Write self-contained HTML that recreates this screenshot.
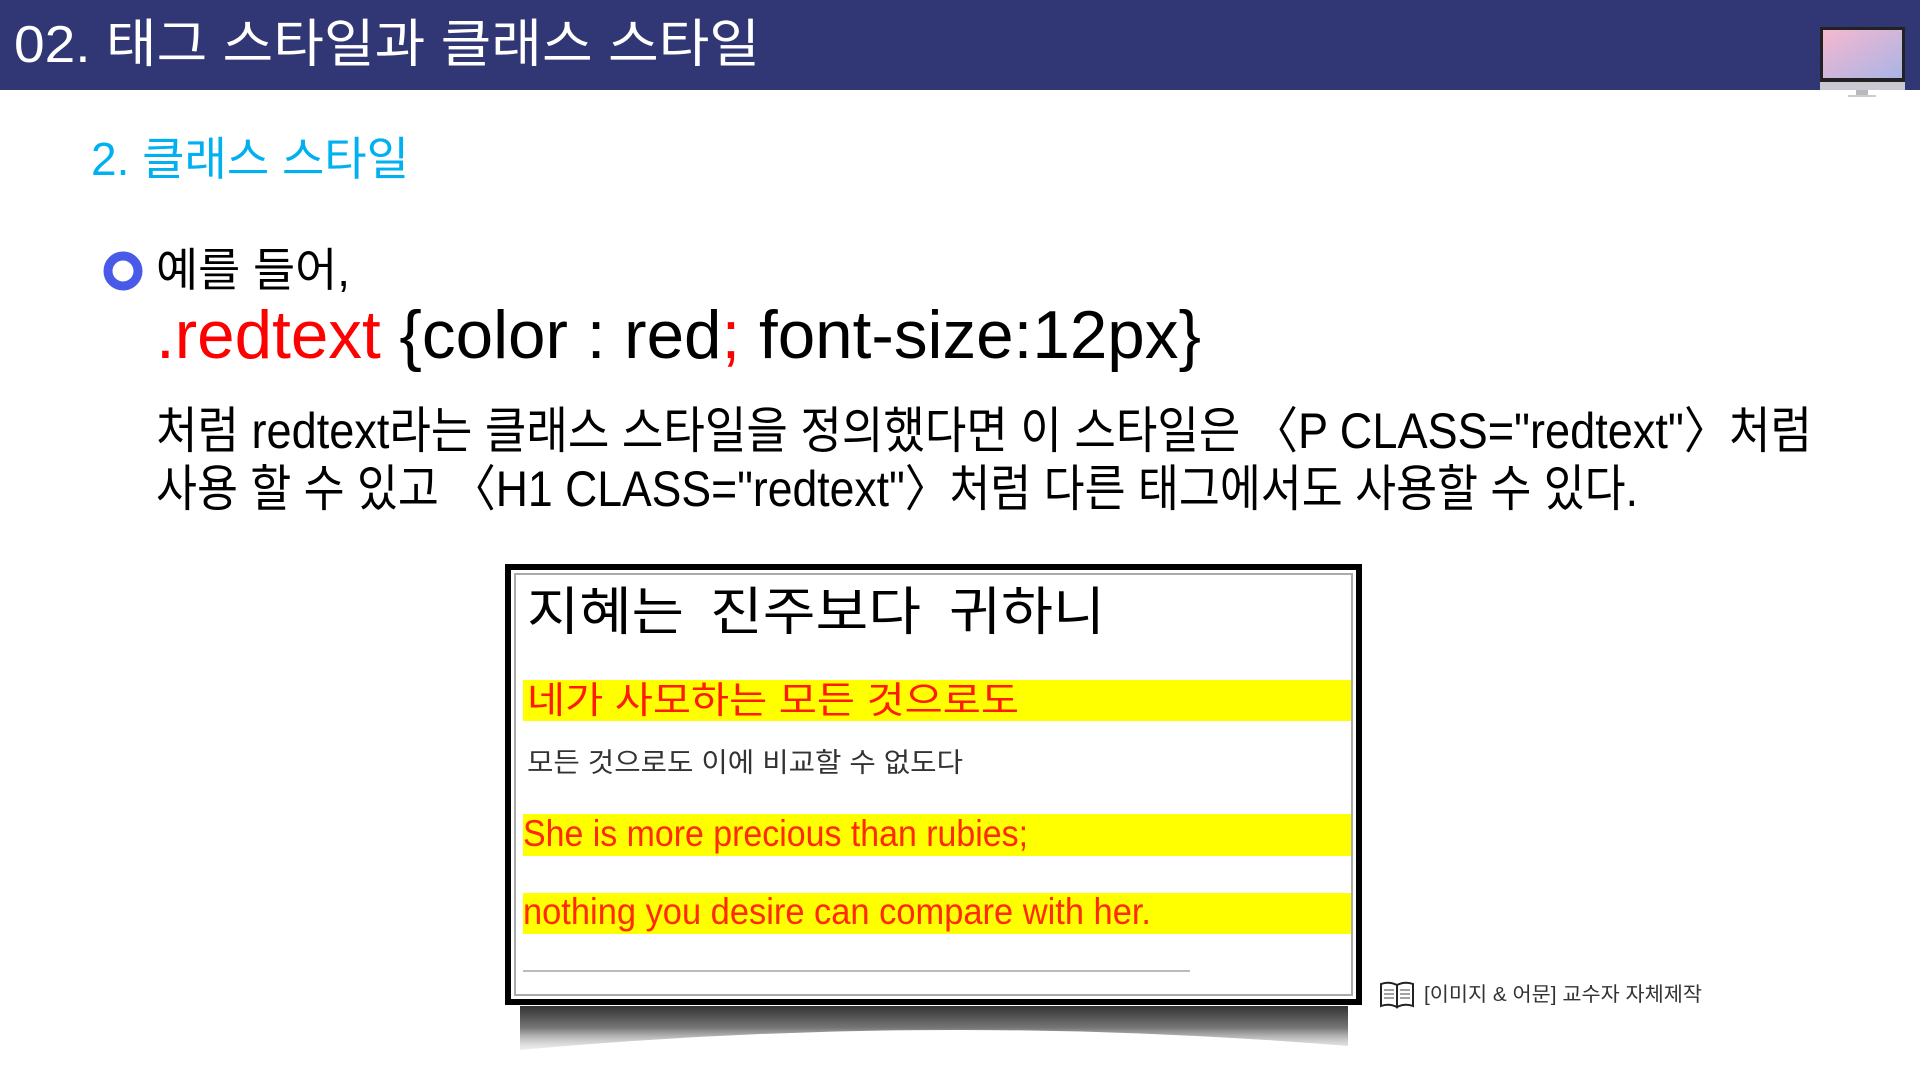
<!DOCTYPE html>
<html><head><meta charset="utf-8"><style>
html,body{margin:0;padding:0;background:#fff;width:1920px;height:1080px;overflow:hidden}
svg{display:block}
text{font-family:"Liberation Sans","Noto Sans CJK KR",sans-serif}
</style></head><body>
<svg width="1920" height="1080" viewBox="0 0 1920 1080" xmlns="http://www.w3.org/2000/svg">
<defs>
<linearGradient id="scr" x1="0" y1="0" x2="1" y2="1"><stop offset="0" stop-color="#f6b8cf"/><stop offset="1" stop-color="#a9b4e6"/></linearGradient>
<linearGradient id="sh2" x1="0" y1="0" x2="0" y2="1"><stop offset="0" stop-color="#333"/><stop offset="0.5" stop-color="#777"/><stop offset="1" stop-color="#ccc" stop-opacity="0.3"/></linearGradient>
</defs>
<rect x="0" y="0" width="1920" height="90" fill="#303774"/>
<text x="14" y="62" font-size="52" fill="#fff" textLength="746" lengthAdjust="spacingAndGlyphs">02. 태그 스타일과 클래스 스타일</text>
<rect x="1820" y="27" width="85" height="55" fill="#222"/>
<rect x="1823" y="30" width="79" height="48" fill="url(#scr)"/>
<rect x="1820" y="82" width="85" height="8" fill="#c9c9cf"/>
<rect x="1856" y="90" width="12" height="6" fill="#b8b8be"/>
<rect x="1848" y="95" width="28" height="2" fill="#ccc"/>

<text x="91" y="175" font-size="46" fill="#00b0f0" textLength="318" lengthAdjust="spacingAndGlyphs">2. 클래스 스타일</text>

<circle cx="123" cy="271" r="15" fill="none" stroke="#4a5ae8" stroke-width="9"/>
<text x="156" y="286" font-size="46" fill="#000" textLength="194" lengthAdjust="spacingAndGlyphs">예를 들어,</text>

<text x="156" y="358" font-size="68" textLength="1045" lengthAdjust="spacingAndGlyphs"><tspan fill="#ff0000">.redtext </tspan><tspan fill="#000">{color : red</tspan><tspan fill="#ff0000">;</tspan><tspan fill="#000"> font-size:12px}</tspan></text>

<text x="156" y="448" font-size="50" fill="#000" textLength="1656" lengthAdjust="spacingAndGlyphs">처럼 redtext라는 클래스 스타일을 정의했다면 이 스타일은 〈P CLASS="redtext"〉처럼</text>
<text x="156" y="506" font-size="50" fill="#000" textLength="1482" lengthAdjust="spacingAndGlyphs">사용 할 수 있고 〈H1 CLASS="redtext"〉처럼 다른 태그에서도 사용할 수 있다.</text>

<path d="M520 1006 L1348 1006 L1348 1046 Q934 1012 520 1050 Z" fill="url(#sh2)"/>
<rect x="508" y="567" width="851" height="435" fill="#fff" stroke="#000" stroke-width="6"/>
<rect x="515" y="574" width="837" height="421" fill="none" stroke="#aaa" stroke-width="2"/>
<text x="527" y="630" font-size="52" fill="#000" textLength="157" lengthAdjust="spacingAndGlyphs">지혜는</text>
<text x="710" y="630" font-size="52" fill="#000" textLength="211" lengthAdjust="spacingAndGlyphs">진주보다</text>
<text x="949" y="630" font-size="52" fill="#000" textLength="156" lengthAdjust="spacingAndGlyphs">귀하니</text>
<rect x="523" y="680" width="828" height="41" fill="#ffff00"/>
<text x="527" y="713" font-size="37" fill="#ff1a00" textLength="492" lengthAdjust="spacingAndGlyphs">네가 사모하는 모든 것으로도</text>
<text x="527" y="772" font-size="27" fill="#333" textLength="436" lengthAdjust="spacingAndGlyphs">모든 것으로도 이에 비교할 수 없도다</text>
<rect x="523" y="814" width="828" height="42" fill="#ffff00"/>
<text x="523" y="846" font-size="37" fill="#ff2a00" textLength="505" lengthAdjust="spacingAndGlyphs">She is more precious than rubies;</text>
<rect x="523" y="893" width="828" height="41" fill="#ffff00"/>
<text x="523" y="924" font-size="37" fill="#ff2a00" textLength="628" lengthAdjust="spacingAndGlyphs">nothing you desire can compare with her.</text>
<rect x="523" y="970" width="667" height="2" fill="#bbb"/>

<g stroke="#222" stroke-width="2" fill="#fff">
<path d="M1381 984 Q1389 981 1397 985 L1397 1007 Q1389 1003 1381 1006 Z"/>
<path d="M1397 985 Q1405 981 1413 984 L1413 1006 Q1405 1003 1397 1007 Z"/>
</g>
<g stroke="#444" stroke-width="1">
<path d="M1384 990h10M1384 994h10M1384 998h10M1400 990h10M1400 994h10M1400 998h10"/>
</g>
<text x="1424" y="1001" font-size="20" fill="#333" textLength="278" lengthAdjust="spacingAndGlyphs">[이미지 &amp; 어문] 교수자 자체제작</text>
</svg>
</body></html>
